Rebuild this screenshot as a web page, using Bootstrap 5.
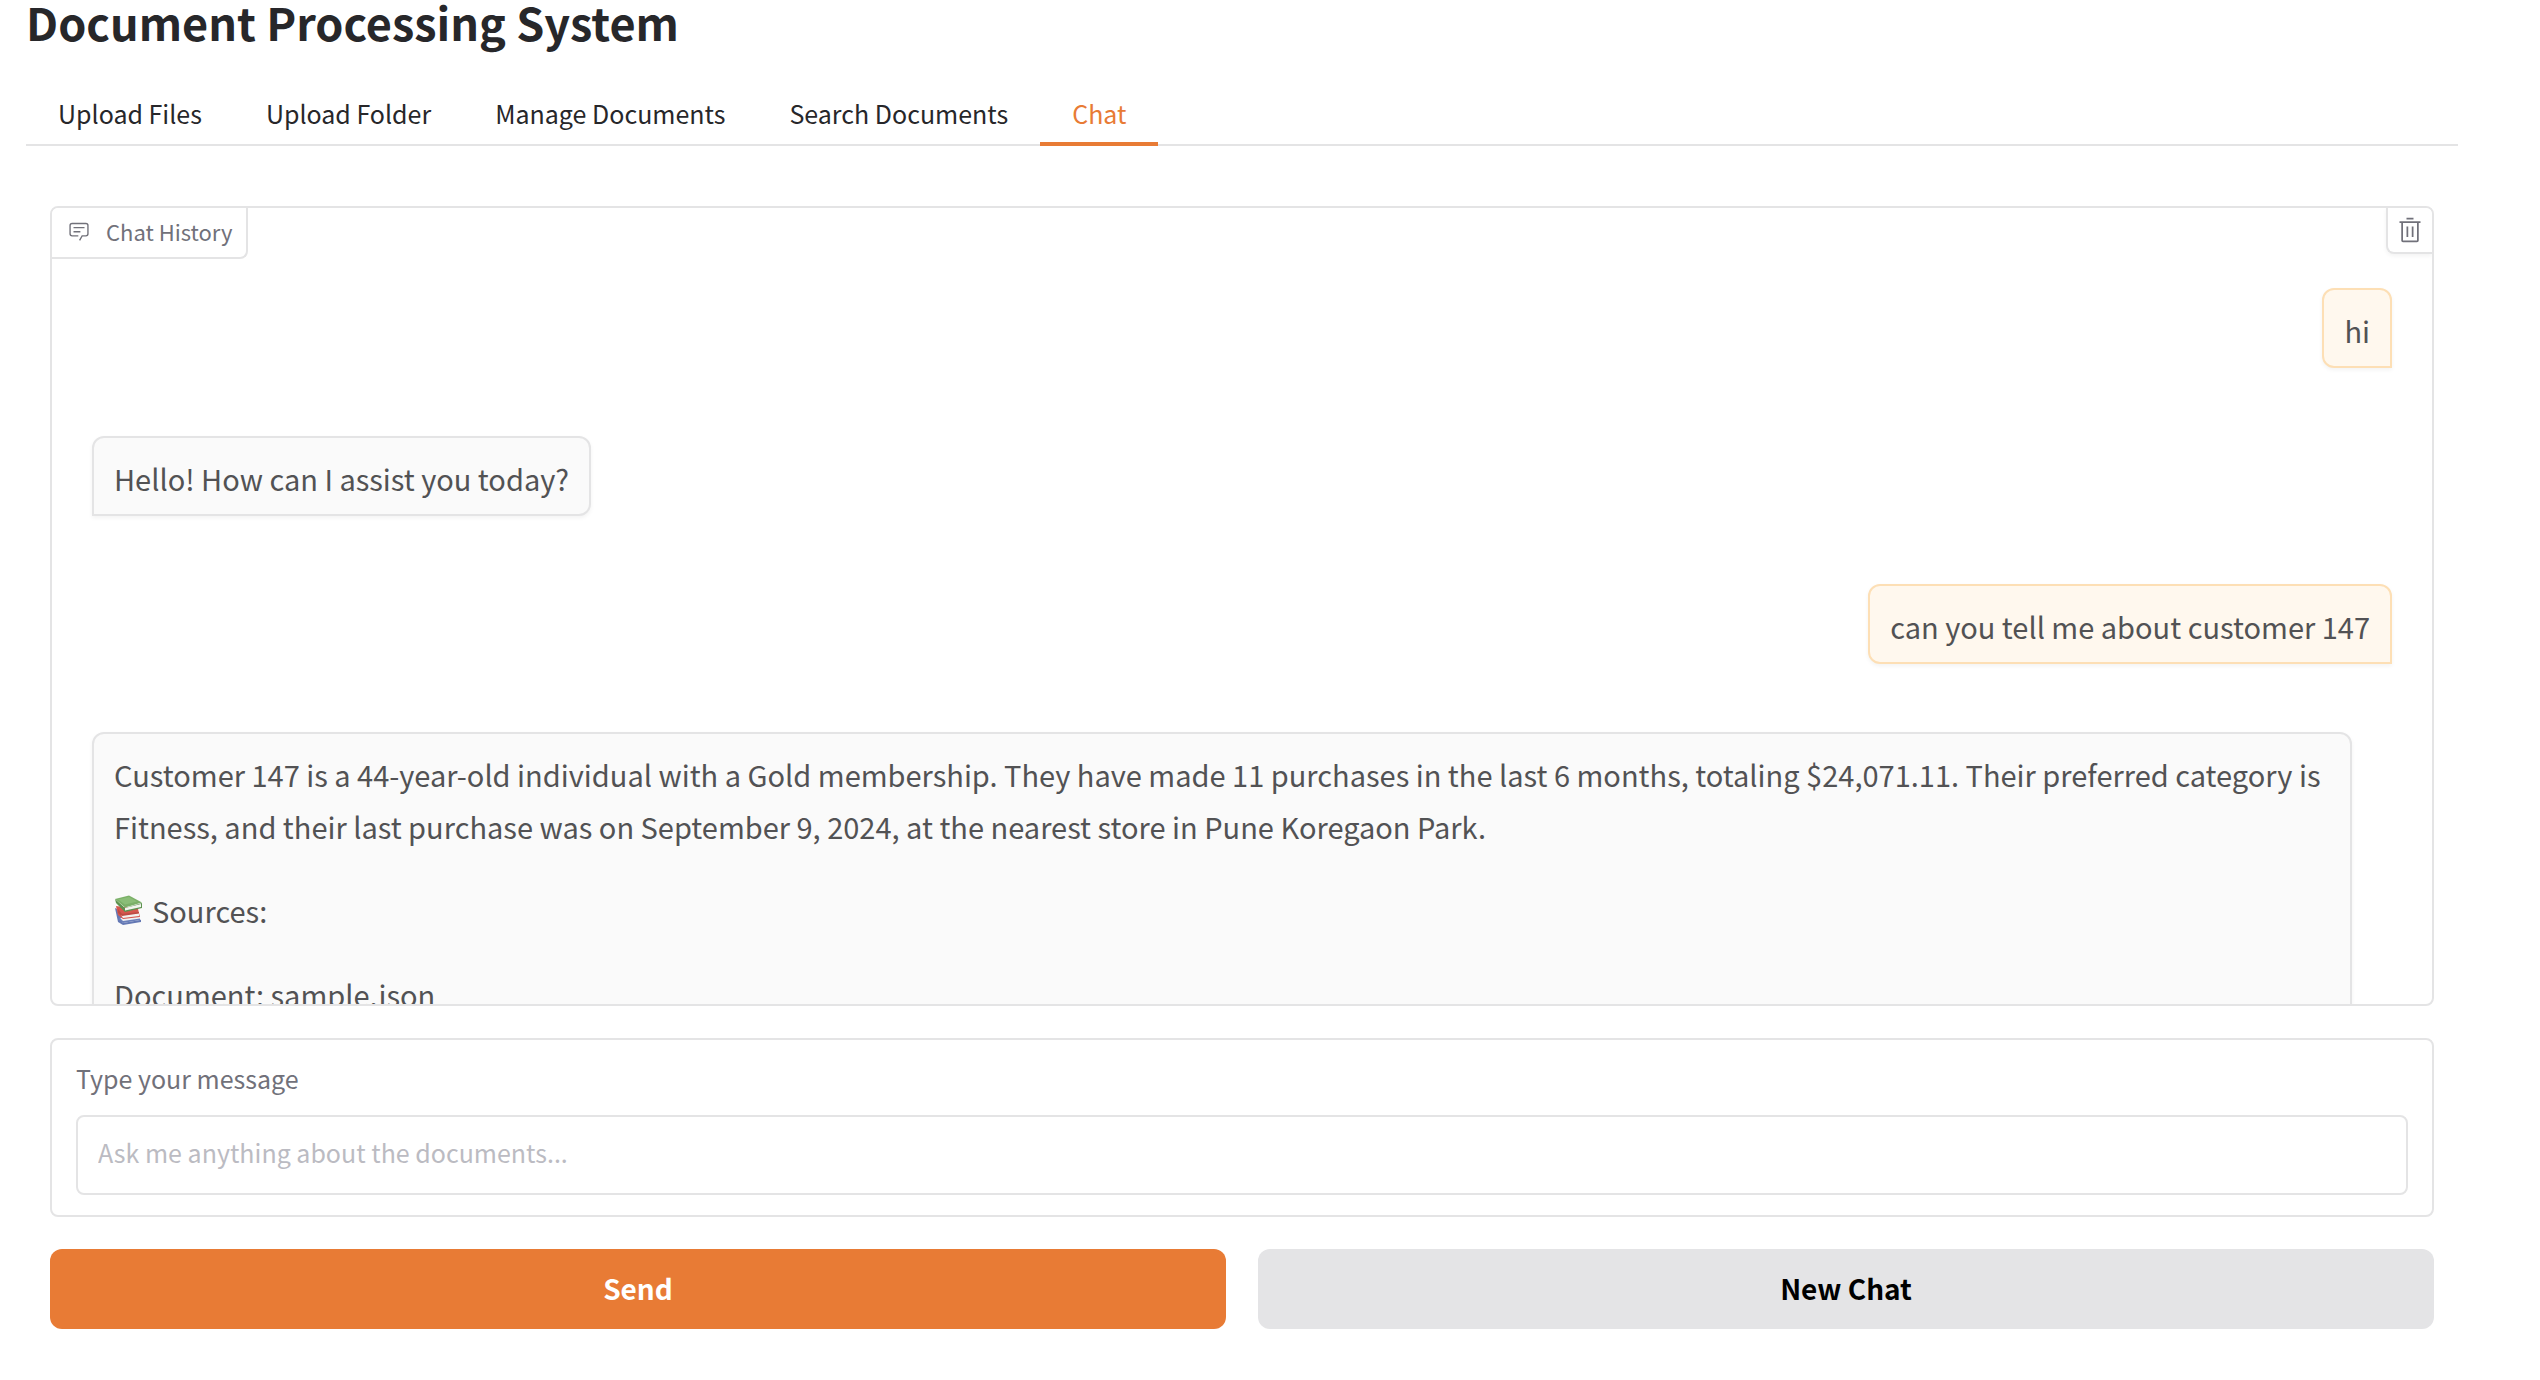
<!DOCTYPE html>
<html lang="en">
<head>
<meta charset="utf-8">
<meta name="viewport" content="width=device-width, initial-scale=1">
<title>Document Processing System</title>
<link href="https://cdn.jsdelivr.net/npm/bootstrap@5.3.0/dist/css/bootstrap.min.css" rel="stylesheet">
<style>
  :root { --line: #e4e4e5; --accent: #e87b35; --ink: #27272a; --muted-ink: #71717a; --soft-ink: #525254; }
  body { font-family: "Noto Sans CJK SC", "Noto Sans", sans-serif; color: var(--ink); background: #fff; }
  .page { padding: 0 82px 48px 26px; }
  .page-title { font-size: 45px; line-height: 44px; font-weight: 700; margin: 0 0 40px; }
  .main-tabs { border-bottom: 2px solid var(--line); }
  .main-tabs .nav-link { font-size: 25px; line-height: 36px; color: var(--ink); border: 0; border-bottom: 4px solid transparent; border-radius: 0; padding: 11px 32px; margin-bottom: -2px; background: none; }
  .main-tabs .nav-link.active { color: var(--accent); border-color: var(--accent); background: none; }
  .pane { padding: 60px 24px 0; gap: 32px; }
  .block { border: 2px solid var(--line); border-radius: 8px; background: #fff; }
  .chat-block { overflow: hidden; height: 800px; }
  .chat-label { top: 0; left: 0; padding: 7px 14px 10px 16px; gap: 16px; border: solid var(--line); border-width: 0 2px 2px 0; border-radius: 0 0 8px 0; font-size: 22px; line-height: 32px; color: var(--muted-ink); background: #fff; }
  .clear-btn { top: 0; right: 0; width: 46px; height: 46px; padding: 0; border: solid var(--line); border-width: 0 0 2px 2px; border-radius: 0 0 0 8px; background: #fff; color: var(--muted-ink); box-shadow: 0 2px 4px rgba(0,0,0,.05); }
  .log { padding: 80px 40px 0; gap: 68px; }
  .bubble { padding: 14px 20px 10px; border: 2px solid var(--line); border-radius: 12px; background: #fafafa; color: var(--soft-ink); font-size: 29px; line-height: 52px; box-shadow: 0 2px 4px rgba(0,0,0,.05); }
  .bubble p { margin: 0 0 32px; }
  .bubble p:last-child { margin: 0; }
  .bubble-bot { border-bottom-left-radius: 0; align-self: flex-start; margin-right: 40px; }
  .bubble-user { border-bottom-right-radius: 0; align-self: flex-end; background: #fff8ee; border-color: #fddfb5; }
  .books { margin-right: 10px; vertical-align: -2px; }
  .message-block { padding: 20px 24px; }
  .message-block label { font-size: 25px; line-height: 36px; color: var(--muted-ink); margin-bottom: 19px; }
  .message-block .form-control { height: 80px; border: 2px solid var(--line); border-radius: 8px; padding: 0 20px 6px; font-size: 25px; line-height: 36px; }
  .message-block .form-control::placeholder { color: #bbbbc2; }
  .actions { gap: 32px; }
  .actions .btn { flex: 1 1 0; height: 80px; border: 0; border-radius: 12px; font-size: 28px; line-height: 44px; font-weight: 700; padding: 0 0 2px; }
  .btn-send { background: var(--accent); color: #fff; }
  .btn-new { background: #e4e4e6; color: #000; }
</style>
</head>
<body>
<main class="page">
  <h1 class="page-title">Document Processing System</h1>
  <ul class="nav main-tabs" role="tablist">
    <li class="nav-item"><button type="button" class="nav-link" role="tab">Upload Files</button></li>
    <li class="nav-item"><button type="button" class="nav-link" role="tab">Upload Folder</button></li>
    <li class="nav-item"><button type="button" class="nav-link" role="tab">Manage Documents</button></li>
    <li class="nav-item"><button type="button" class="nav-link" role="tab">Search Documents</button></li>
    <li class="nav-item"><button type="button" class="nav-link active" role="tab" aria-selected="true">Chat</button></li>
  </ul>
  <section class="pane d-flex flex-column">
    <div class="block chat-block position-relative">
      <div class="chat-label position-absolute d-flex align-items-center">
        <svg width="22" height="22" viewBox="0 0 32 32" fill="currentColor" aria-hidden="true"><path d="M17.74 30L16 29l4-7h6a2 2 0 0 0 2-2V8a2 2 0 0 0-2-2H6a2 2 0 0 0-2 2v12a2 2 0 0 0 2 2h9v2H6a4 4 0 0 1-4-4V8a4 4 0 0 1 4-4h20a4 4 0 0 1 4 4v12a4 4 0 0 1-4 4h-4.84Z"/><path d="M8 10h16v2H8zm0 6h10v2H8z"/></svg>
        <span>Chat History</span>
      </div>
      <button type="button" class="clear-btn position-absolute d-flex align-items-center justify-content-center" aria-label="Clear">
        <svg width="28" height="28" viewBox="0 0 32 32" fill="currentColor" aria-hidden="true"><path d="M12 12h2v12h-2zm6 0h2v12h-2z"/><path d="M4 6v2h2v20a2 2 0 0 0 2 2h16a2 2 0 0 0 2-2V8h2V6zm4 22V8h16v20zm4-26h8v2h-8z"/></svg>
      </button>
      <div class="log d-flex flex-column">
        <div class="bubble bubble-user"><p>hi</p></div>
        <div class="bubble bubble-bot"><p>Hello! How can I assist you today?</p></div>
        <div class="bubble bubble-user"><p>can you tell me about customer 147</p></div>
        <div class="bubble bubble-bot">
          <p>Customer 147 is a 44-year-old individual with a Gold membership. They have made 11 purchases in the last 6 months, totaling $24,071.11. Their preferred category is Fitness, and their last purchase was on September 9, 2024, at the nearest store in Pune Koregaon Park.</p>
          <p><svg class="books" width="28" height="30" viewBox="0 0 28 30" aria-hidden="true">
            <path d="M1 13L4 27L9 30L27 27V25L14 19Z" fill="#6478b4"/>
            <path d="M6 23L25 21.500L26 25L9 28Z" fill="#f1f1f3"/>
            <path d="M5 22L9 26L26 23.500V25L9 28L5 25Z" fill="#6a7fba"/>
            <path d="M2 11L24 14L26 22L9 24L4 20Z" fill="#d5564e"/>
            <path d="M7 20L25 18V21L9 23Z" fill="#f3f0ee"/>
            <path d="M4 14L8 19L25 17V18.500L8 21L4 18Z" fill="#bd4a43"/>
            <path d="M1 4L11 13L28 8V13L11 17L2 8Z" fill="#5c924f"/>
            <path d="M11 13L27 9V12L11 15.500Z" fill="#f2f4ee"/>
            <path d="M1 4L15 0.500L28 7.500L11 12.500Z" fill="#7bb068"/>
            <path d="M4 4.500L15 2L23 6.500L11 9.500Z" fill="#8abd77"/>
          </svg>Sources:</p>
          <p>Document: sample.json</p>
        </div>
      </div>
    </div>
    <div class="block message-block">
      <label for="message" class="d-block">Type your message</label>
      <input id="message" type="text" class="form-control" placeholder="Ask me anything about the documents...">
    </div>
    <div class="actions d-flex">
      <button type="button" class="btn btn-send">Send</button>
      <button type="button" class="btn btn-new">New Chat</button>
    </div>
  </section>
</main>
<script src="https://cdn.jsdelivr.net/npm/bootstrap@5.3.0/dist/js/bootstrap.bundle.min.js"></script>
</body>
</html>
